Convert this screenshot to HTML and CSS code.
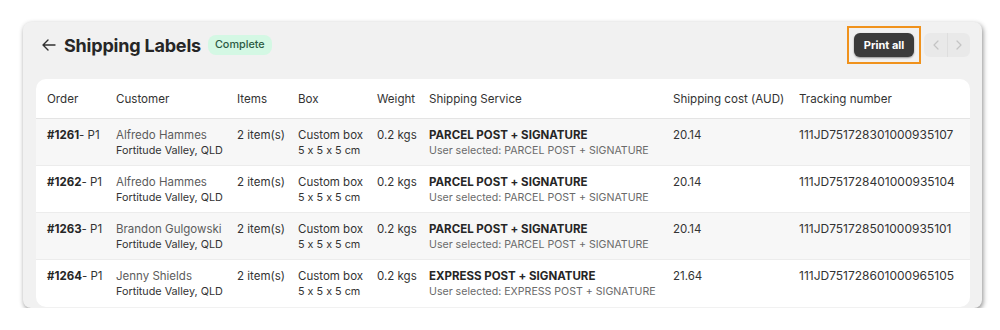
FILE: index.html
```html
<!DOCTYPE html>
<html lang="en">
  <head>
    <meta charset="UTF-8" />
    <meta name="viewport" content="width=device-width, initial-scale=1.0" />
    <title>Shipping Labels</title>
    <link rel="stylesheet" href="styles.css">
  </head>
  <body>
    <div class="panel">
      <header class="page-header">
        <div class="title-group">
          <button class="back-btn" aria-label="Back">
            <svg viewBox="0 0 14 12" width="14" height="12" class="back-icon">
              <path d="M13 6H1.5M6 1L1 6l5 5" />
            </svg>
          </button>
          <h1>Shipping Labels</h1>
          <span class="badge">Complete</span>
        </div>
        <div class="actions">
          <!-- highlight box round the print button -->
          <div class="highlight">
            <button class="print-btn">Print all</button>
          </div>
          <div class="pager">
            <button class="pager-btn" aria-label="Previous">
              <svg viewBox="0 0 6 10" width="6" height="10"><path d="M5 1L1 5l4 4" /></svg>
            </button>
            <button class="pager-btn" aria-label="Next">
              <svg viewBox="0 0 6 10" width="6" height="10"><path d="M1 1l4 4-4 4" /></svg>
            </button>
          </div>
        </div>
      </header>

      <div class="card">
        <table class="labels">
          <colgroup>
            <col style="width: 69px" />
            <col style="width: 121px" />
            <col style="width: 61px" />
            <col style="width: 79px" />
            <col style="width: 52px" />
            <col style="width: 244px" />
            <col style="width: 126px" />
            <col style="width: 182px" />
          </colgroup>
          <thead>
            <tr>
              <th>Order</th>
              <th>Customer</th>
              <th>Items</th>
              <th>Box</th>
              <th>Weight</th>
              <th>Shipping Service</th>
              <th>Shipping cost (AUD)</th>
              <th>Tracking number</th>
            </tr>
          </thead>
          <tbody>
            <tr>
              <td><b>#1261</b>- P1</td>
              <td><div class="name">Alfredo Hammes</div><div class="sub">Fortitude Valley, QLD</div></td>
              <td>2 item(s)</td>
              <td><div>Custom box</div><div class="sub">5 x 5 x 5 cm</div></td>
              <td>0.2 kgs</td>
              <td><div class="service">PARCEL POST + SIGNATURE</div><div class="muted">User selected: PARCEL POST + SIGNATURE</div></td>
              <td>20.14</td>
              <td class="tracking">111JD751728301000935107</td>
            </tr>
            <tr>
              <td><b>#1262</b>- P1</td>
              <td><div class="name">Alfredo Hammes</div><div class="sub">Fortitude Valley, QLD</div></td>
              <td>2 item(s)</td>
              <td><div>Custom box</div><div class="sub">5 x 5 x 5 cm</div></td>
              <td>0.2 kgs</td>
              <td><div class="service">PARCEL POST + SIGNATURE</div><div class="muted">User selected: PARCEL POST + SIGNATURE</div></td>
              <td>20.14</td>
              <td class="tracking">111JD751728401000935104</td>
            </tr>
            <tr>
              <td><b>#1263</b>- P1</td>
              <td><div class="name">Brandon Gulgowski</div><div class="sub">Fortitude Valley, QLD</div></td>
              <td>2 item(s)</td>
              <td><div>Custom box</div><div class="sub">5 x 5 x 5 cm</div></td>
              <td>0.2 kgs</td>
              <td><div class="service">PARCEL POST + SIGNATURE</div><div class="muted">User selected: PARCEL POST + SIGNATURE</div></td>
              <td>20.14</td>
              <td class="tracking">111JD751728501000935101</td>
            </tr>
            <tr>
              <td><b>#1264</b>- P1</td>
              <td><div class="name">Jenny Shields</div><div class="sub">Fortitude Valley, QLD</div></td>
              <td>2 item(s)</td>
              <td><div>Custom box</div><div class="sub">5 x 5 x 5 cm</div></td>
              <td>0.2 kgs</td>
              <td><div class="service">EXPRESS POST + SIGNATURE</div><div class="muted">User selected: EXPRESS POST + SIGNATURE</div></td>
              <td>21.64</td>
              <td class="tracking">111JD751728601000965105</td>
            </tr>
          </tbody>
        </table>
      </div>
    </div>
  </body>
</html>
```

FILE: styles.css
```css
html,
body {
  margin: 0;
  background: #fff;
  font-family: Inter, "Noto Sans", Arial, sans-serif;
  font-feature-settings: "calt" 0;
  color: #303030;
}
h1 {
  margin: 0;
}
button {
  font-family: inherit;
  border: none;
  cursor: pointer;
}

.panel {
  margin: 22px 0 0 23px;
  width: 959px;
  height: 286px;
  box-sizing: border-box;
  padding: 11px 12px 0 13px;
  background: #f1f1f1;
  border-radius: 8px;
  box-shadow: 1px 2px 5px rgba(0, 0, 0, 0.45);
  overflow: hidden;
}

/* header */
.page-header {
  display: flex;
  align-items: center;
  justify-content: space-between;
  height: 24px;
  margin-bottom: 22px;
}
.title-group {
  display: flex;
  align-items: center;
  gap: 7px;
}
.back-btn {
  display: flex;
  align-items: center;
  background: none;
  padding: 0 0 0 6px;
  margin-right: 1px;
}
.back-icon path {
  fill: none;
  stroke: #303030;
  stroke-width: 1.4;
  stroke-linecap: round;
  stroke-linejoin: round;
}
.title-group h1 {
  font-size: 18px;
  font-weight: 700;
  color: #262626;
  letter-spacing: -0.2px;
}
.badge {
  height: 20px;
  line-height: 20px;
  padding: 0 7px;
  border-radius: 8px;
  background: #d4f8e4;
  color: #2c5a43;
  font-size: 10.8px;
  font-weight: 500;
}

.actions {
  display: flex;
  align-items: center;
  gap: 3px;
}
.highlight {
  padding: 5px;
  border: 2px solid #f0921c;
}
.print-btn {
  display: block;
  height: 24px;
  width: 60px;
  border-radius: 6px;
  background: #3b3b3b;
  color: #fff;
  font-size: 11px;
  font-weight: 700;
  box-shadow: 0 1px 2px rgba(0, 0, 0, 0.4);
}
.pager {
  display: flex;
  height: 24px;
  background: #e9e9e9;
  border-radius: 6px;
  overflow: hidden;
}
.pager-btn {
  display: flex;
  align-items: center;
  justify-content: center;
  width: 23px;
  background: none;
  padding: 0;
}
.pager-btn + .pager-btn {
  border-left: 1px solid #dedede;
}
.pager-btn path {
  fill: none;
  stroke: #c4c4c4;
  stroke-width: 1.2;
  stroke-linecap: round;
  stroke-linejoin: round;
}

/* table card */
.card {
  background: #fff;
  border-radius: 10px;
  overflow: hidden;
}
.labels {
  width: 934px;
  table-layout: fixed;
  border-collapse: collapse;
  font-size: 11.5px;
}
.labels th {
  height: 39px;
  padding: 0 0 0 11px;
  text-align: left;
  font-size: 11.6px;
  font-weight: 400;
  color: #333;
  border-bottom: 1px solid #e4e4e4;
  white-space: nowrap;
}
.labels td {
  height: 47px;
  padding: 8px 0 0 11px;
  vertical-align: top;
  white-space: nowrap;
  color: #333;
  line-height: 16px;
  box-sizing: border-box;
}
.labels tbody tr {
  border-bottom: 1px solid #ececec;
}
.labels tbody tr:nth-child(odd) {
  background: #f7f7f7;
}
.labels tbody tr:last-child {
  border-bottom: none;
}
.labels b {
  font-weight: 700;
  color: #262626;
}
.labels .tracking {
  font-size: 12px;
}
.name {
  color: #5c5c5c;
}
.sub {
  font-size: 10.8px;
  color: #333;
}
.service {
  font-size: 11.5px;
  font-weight: 700;
  color: #262626;
}
.muted {
  font-size: 10.6px;
  color: #6a6a6a;
}
```
